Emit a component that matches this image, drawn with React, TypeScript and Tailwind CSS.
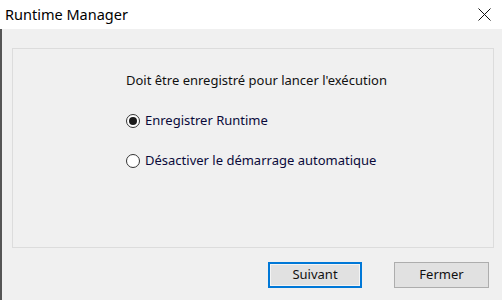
import React from "react";

function Radio({ checked, label }: { checked: boolean; label: string }) {
  return (
    <div className="flex h-[20px] items-center">
      <div className="flex h-[14px] w-[14px] items-center justify-center rounded-full border border-[#333333] bg-white">
        {checked && <div className="h-[8px] w-[8px] rounded-full bg-[#1a1a1a]" />}
      </div>
      <span className="ml-[5px] text-[13px] text-[#0a0a3a]">{label}</span>
    </div>
  );
}

export default function App() {
  return (
    <div
      className="flex h-[300px] w-[502px] flex-col"
      style={{ fontFamily: '"Noto Sans", "Open Sans", sans-serif' }}
    >
      <div className="flex h-[29px] items-center justify-between bg-white pl-[5px] pr-[11px]">
        <span className="text-[14.5px] text-black">Runtime Manager</span>
        <svg width="13" height="13" viewBox="0 0 13 13">
          <path d="M0.5 0.5 L12.5 12.5 M12.5 0.5 L0.5 12.5" stroke="#111" strokeWidth="1" fill="none" />
        </svg>
      </div>
      <div className="flex flex-1 flex-col border-l-2 border-[#555555] bg-[#f0f0f0] pl-[10px] pr-[8px] pt-[19px]">
        <div className="flex h-[200px] flex-col border border-[#dcdcdc] pl-[113px] pt-[22px]">
          <div className="flex h-[20px] items-center text-[13px] text-[#111111]">
            Doit être enregistré pour lancer l'exécution
          </div>
          <div className="mt-[20px]">
            <Radio checked label="Enregistrer Runtime" />
          </div>
          <div className="mt-[20px]">
            <Radio checked={false} label="Désactiver le démarrage automatique" />
          </div>
        </div>
        <div className="mt-[14px] flex justify-end gap-[32px] pr-[5px]">
          <button className="flex h-[26px] w-[94px] items-center justify-center border-2 border-[#0078d7] bg-[#e1e1e1] text-[13px] text-[#111111] shadow-[inset_0_0_0_1px_#f4f4f4]">
            Suivant
          </button>
          <button className="flex h-[26px] w-[95px] items-center justify-center border border-[#adadad] bg-[#e1e1e1] text-[13px] text-[#111111]">
            Fermer
          </button>
        </div>
      </div>
    </div>
  );
}
